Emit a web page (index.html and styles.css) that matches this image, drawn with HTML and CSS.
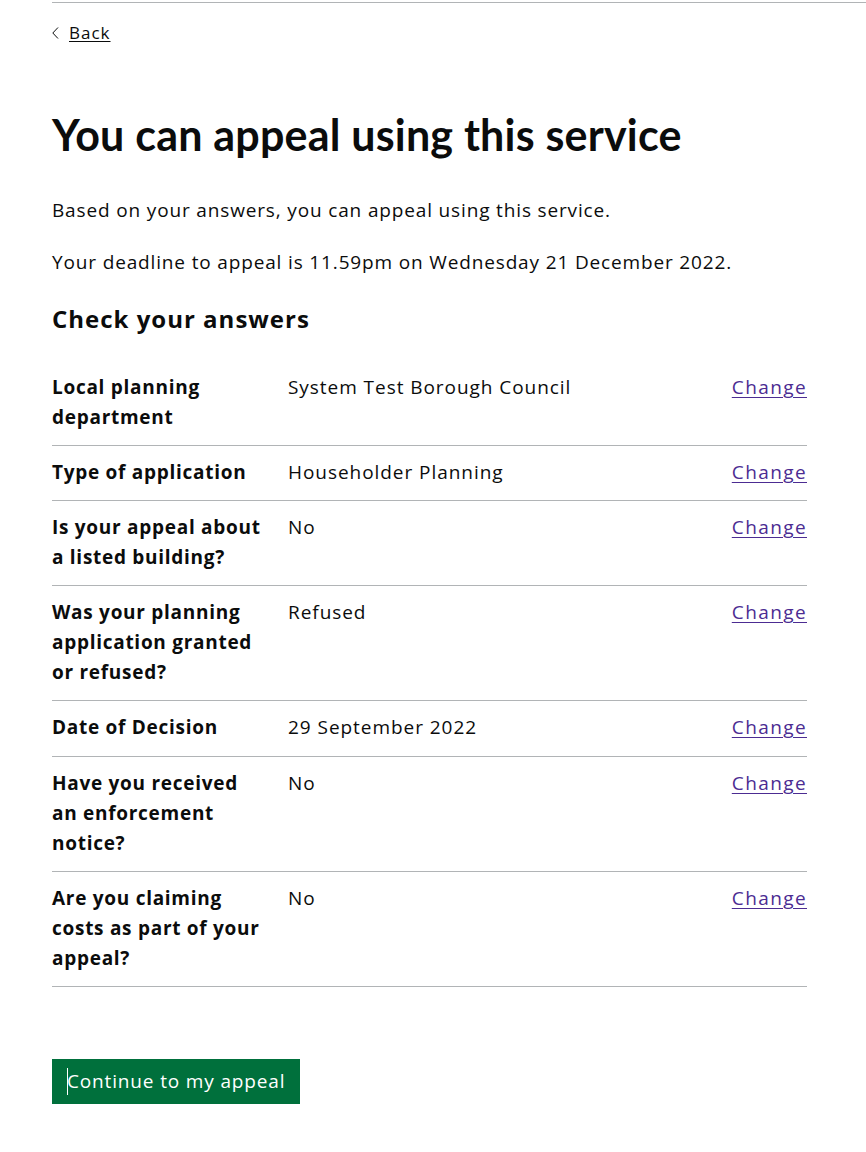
FILE: index.html
```html
<!DOCTYPE html>
<html lang="en">
<head>
<meta charset="utf-8">
<title>You can appeal using this service</title>
<link rel="stylesheet" href="styles.css">
</head>
<body>
<div class="rule"></div>
<main class="page">
  <a class="back" href="#">
    <svg class="back-icon" width="7" height="12" viewBox="0 0 7 12" aria-hidden="true"><polyline points="6,0.5 0.8,6 6,11.5" fill="none" stroke="#0b0c0c" stroke-width="1"/></svg>
    <span class="back-text">Back</span>
  </a>
  <h1 class="title">You can appeal using this service</h1>
  <p class="body">Based on your answers, you can appeal using this service.</p>
  <p class="body">Your deadline to appeal is 11.59pm on Wednesday 21 December 2022.</p>
  <h2 class="subtitle">Check your answers</h2>
  <dl class="summary">
    <div class="row"><dt class="key">Local planning department</dt><dd class="value">System Test Borough Council</dd><dd class="actions"><a class="link" href="#">Change</a></dd></div>
    <div class="row"><dt class="key">Type of application</dt><dd class="value">Householder Planning</dd><dd class="actions"><a class="link" href="#">Change</a></dd></div>
    <div class="row"><dt class="key">Is your appeal about a listed building?</dt><dd class="value">No</dd><dd class="actions"><a class="link" href="#">Change</a></dd></div>
    <div class="row"><dt class="key">Was your planning application granted or refused?</dt><dd class="value">Refused</dd><dd class="actions"><a class="link" href="#">Change</a></dd></div>
    <div class="row row-tall"><dt class="key">Date of Decision</dt><dd class="value">29 September 2022</dd><dd class="actions"><a class="link" href="#">Change</a></dd></div>
    <div class="row"><dt class="key">Have you received an enforcement notice?</dt><dd class="value">No</dd><dd class="actions"><a class="link" href="#">Change</a></dd></div>
    <div class="row"><dt class="key">Are you claiming costs as part of your appeal?</dt><dd class="value">No</dd><dd class="actions"><a class="link" href="#">Change</a></dd></div>
  </dl>
  <button class="button" type="button"><span class="caret"></span>Continue to my appeal</button>
</main>
</body>
</html>
```

FILE: styles.css
```css
html, body {
  margin: 0;
  padding: 0;
  background: #ffffff;
}

body {
  font-family: "Open Sans", "Liberation Sans", Arial, sans-serif;
  color: #0b0c0c;
  letter-spacing: 0.85px;
}

.rule {
  margin: 2px 0 0 52px;
  border-top: 1px solid #b1b4b6;
}

.page {
  padding: 0 59px 0 52px;
}

.back {
  display: inline-flex;
  align-items: center;
  margin-top: 20px;
  font-size: 17px;
  line-height: 20px;
  color: #0b0c0c;
  text-decoration: none;
  letter-spacing: 1px;
}

.back-icon {
  display: block;
  margin-right: 10px;
}

.back-text {
  text-decoration: underline;
  text-decoration-thickness: 1px;
  text-underline-offset: 2px;
}

.title {
  margin: 66px 0 35px;
  font-family: "Lato", "Open Sans", sans-serif;
  font-weight: 700;
  font-size: 43px;
  line-height: 50px;
  letter-spacing: 0.2px;
}

.body {
  margin: 0 0 22px;
  font-size: 19px;
  line-height: 30px;
}

.subtitle {
  margin: 27px 0 0;
  font-size: 24px;
  line-height: 30px;
  font-weight: 700;
  letter-spacing: 1px;
}

.summary {
  margin: 27px 0 0;
  padding: 0;
}

.row {
  display: grid;
  grid-template-columns: 212px 1fr auto;
  column-gap: 24px;
  padding: 11px 0 13px;
  border-bottom: 1px solid #b1b4b6;
  font-size: 19px;
  line-height: 30px;
}

.row-tall {
  padding-bottom: 14px;
}

.key {
  font-weight: 700;
  margin: 0;
  letter-spacing: 0.72px;
}

.value {
  margin: 0;
  letter-spacing: 0.95px;
}

.actions {
  margin: 0;
  text-align: right;
}

.link {
  color: #4c2c92;
  letter-spacing: 1.4px;
  text-decoration: underline;
  text-decoration-thickness: 1px;
  text-underline-offset: 3px;
}

.button {
  position: relative;
  display: block;
  margin: 72px 0 0;
  padding: 0 15px;
  height: 45px;
  border: 0;
  border-radius: 0;
  background: #00703c;
  box-shadow: 0 2px 0 #002d18;
  color: #ffffff;
  font-family: "Open Sans", "Liberation Sans", Arial, sans-serif;
  font-size: 19px;
  line-height: 45px;
  letter-spacing: 0.85px;
  cursor: pointer;
}

.caret {
  position: absolute;
  left: 15px;
  top: 9px;
  width: 1px;
  height: 27px;
  background: #ffffff;
}
```
